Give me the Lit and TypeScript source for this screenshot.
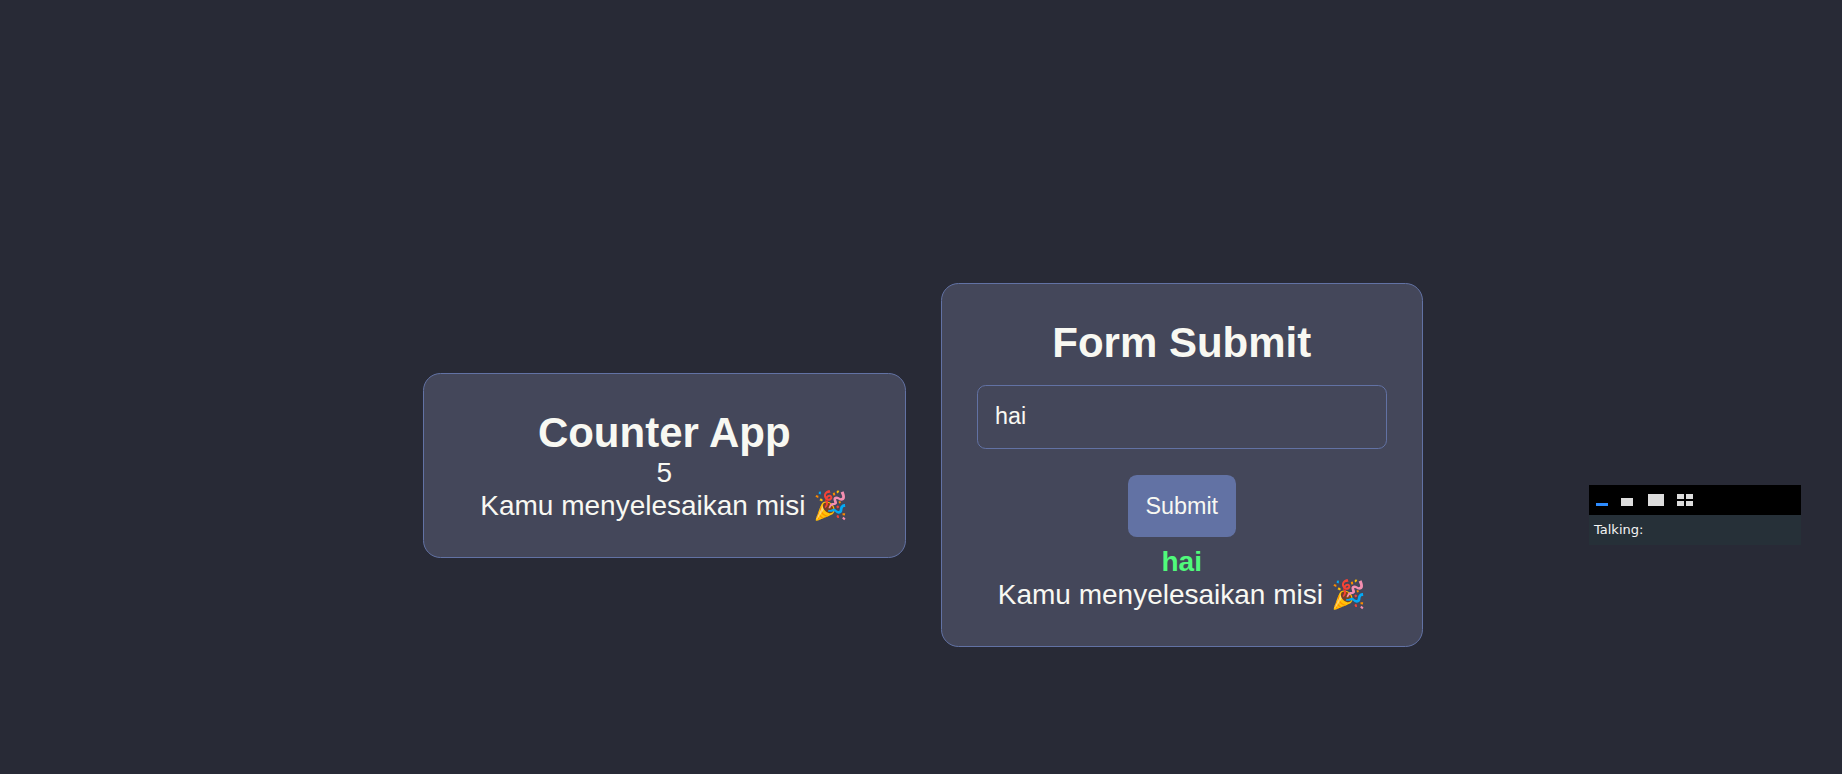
import { LitElement, html, css } from "lit";
import { customElement, state } from "lit/decorators.js";

@customElement("app-root")
class AppRoot extends LitElement {
  @state() count = 5;
  @state() value = "hai";
  @state() submitted = "hai";

  static styles = css`
    :host {
      display: block;
      position: relative;
      box-sizing: border-box;
      height: 774px;
      overflow: hidden;
      padding: 156px 0 0 4px;
      background: #282a36;
      color: #f8f8f2;
      font-family: "Liberation Sans", Arial, sans-serif;
      font-size: 28px;
    }
    .apps {
      display: grid;
      grid-template-columns: 1fr 1fr;
      gap: 35px;
      align-items: center;
      width: 1000px;
      height: 618px;
      margin: 0 auto;
    }
    .card {
      box-sizing: border-box;
      padding: 35px;
      border: 1px solid #6272a4;
      border-radius: 17.5px;
      background: #44475a;
      text-align: center;
    }
    h2 {
      margin: 0;
      font-size: 42px;
      line-height: 48px;
    }
    p {
      margin: 0;
      line-height: 32px;
    }
    .done {
      line-height: 33px;
      white-space: nowrap;
    }
    form {
      display: flex;
      flex-direction: column;
      align-items: center;
      gap: 26px;
      padding: 18px 0 8.75px;
    }
    input,
    button {
      box-sizing: border-box;
      margin: 0;
      padding: 17.5px;
      border-radius: 8.75px;
      color: inherit;
      font-family: inherit;
      font-size: 23.333px;
      line-height: 27px;
    }
    input {
      width: 100%;
      height: 64px;
      padding: 16.5px 17.5px 18.5px;
      border: 1px solid #6272a4;
      background: transparent;
      outline: none;
    }
    button {
      height: 62px;
      border: 0;
      background: #6272a4;
    }
    .result {
      color: #50fa7b;
      font-weight: bold;
    }
    .talk {
      position: absolute;
      left: 1589px;
      top: 485px;
      width: 212px;
      font-family: "DejaVu Sans", sans-serif;
      font-size: 13px;
    }
    .bar {
      display: block;
      height: 30px;
      background: #000;
    }
    .talking {
      height: 30px;
      padding-left: 5px;
      box-sizing: border-box;
      background: #263038;
      color: #f4f4f4;
      line-height: 29px;
    }
  `;

  private submit(e: Event) {
    e.preventDefault();
    this.submitted = this.value;
  }

  render() {
    return html`
      <main class="apps">
        <section class="card">
          <h2>Counter App</h2>
          <p>${this.count}</p>
          <p class="done">Kamu menyelesaikan misi 🎉</p>
        </section>
        <section class="card">
          <h2>Form Submit</h2>
          <form @submit=${this.submit}>
            <input
              type="text"
              .value=${this.value}
              @input=${(e: Event) => (this.value = (e.target as HTMLInputElement).value)}
            />
            <button type="submit">Submit</button>
          </form>
          <p class="result">${this.submitted}</p>
          <p class="done">Kamu menyelesaikan misi 🎉</p>
        </section>
      </main>
      <aside class="talk">
        <svg class="bar" width="212" height="30" shape-rendering="crispEdges">
          <rect x="7" y="18" width="12" height="3" fill="#2d8cff" />
          <g fill="#ddd">
            <rect x="32" y="13" width="12" height="8" />
            <rect x="59" y="9" width="16" height="12" />
            <rect x="88" y="9" width="7" height="5" />
            <rect x="97" y="9" width="7" height="5" />
            <rect x="88" y="16" width="7" height="5" />
            <rect x="97" y="16" width="7" height="5" />
          </g>
        </svg>
        <div class="talking">Talking:</div>
      </aside>
    `;
  }
}
